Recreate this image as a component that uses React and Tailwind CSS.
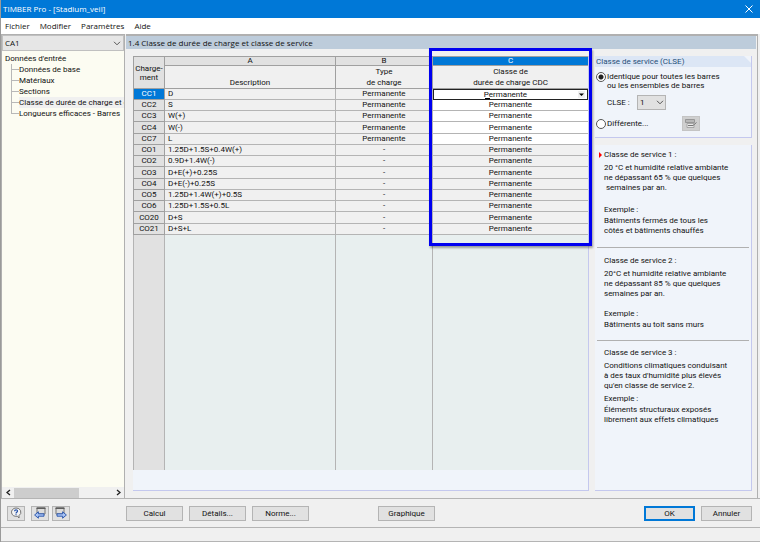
import { useState } from 'react'

const menus = ['Fichier', 'Modifier', 'Paramètres', 'Aide']

const treeItems = [
  'Données de base',
  'Matériaux',
  'Sections',
  'Classe de durée de charge et classe de service',
  'Longueurs efficaces - Barres',
]

const loads = [
  { id: 'CC1', description: 'D', type: 'Permanente', editable: true },
  { id: 'CC2', description: 'S', type: 'Permanente', editable: true },
  { id: 'CC3', description: 'W(+)', type: 'Permanente', editable: true },
  { id: 'CC4', description: 'W(-)', type: 'Permanente', editable: true },
  { id: 'CC7', description: 'L', type: 'Permanente', editable: true },
  { id: 'CO1', description: '1.25D+1.5S+0.4W(+)', type: '-' },
  { id: 'CO2', description: '0.9D+1.4W(-)', type: '-' },
  { id: 'CO3', description: 'D+E(+)+0.25S', type: '-' },
  { id: 'CO4', description: 'D+E(-)+0.25S', type: '-' },
  { id: 'CO5', description: '1.25D+1.4W(+)+0.5S', type: '-' },
  { id: 'CO6', description: '1.25D+1.5S+0.5L', type: '-' },
  { id: 'CO20', description: 'D+S', type: '-' },
  { id: 'CO21', description: 'D+S+L', type: '-' },
]

function Chevron({ className }) {
  return (
    <svg viewBox="0 0 8 5" className={className} fill="none" stroke="#555" aria-hidden="true">
      <path d="M1 0.8 4 3.8 7 0.8" />
    </svg>
  )
}

function PushButton({ children, primary, className = '' }) {
  return (
    <button
      type="button"
      className={`h-[15px] bg-[#e1e1e1] text-center leading-[11px] ${
        primary ? 'border-2 border-[#0078d7]' : 'border border-[#b4b4b4]'
      } ${className}`}
    >
      {children}
    </button>
  )
}

function WindowIcon({ back }) {
  return (
    <svg viewBox="0 0 14 12" className="h-3 w-[14px]" aria-hidden="true">
      <path d={back ? 'M4 1h8v6H4z' : 'M2 1h8v6H2z'} fill="#dcdcdc" stroke="#777" />
      <path d={back ? 'M3.5 1.2h9' : 'M1.5 1.2h9'} stroke="#555" strokeWidth="1.4" />
      <path
        d={back ? 'M1.6 8 5.4 4.8V6.8H11V9.2H5.4V11.2Z' : 'M12.4 8 8.6 4.8V6.8H3V9.2H8.6V11.2Z'}
        fill="#a9c4f5"
        stroke="#2450a8"
        strokeWidth="0.9"
      />
    </svg>
  )
}

function Sidebar() {
  return (
    <aside className="flex w-[124px] shrink-0 flex-col border-x border-t border-[#b0b0b0] bg-[#fcfcf2]">
      <div className="relative">
        <select aria-label="Cas" className="block h-4 w-full appearance-none border border-[#c0c0c0] bg-[#e6e6e6] px-[2px] font-['Open_Sans',sans-serif] leading-[14px]">
          <option>CA1</option>
        </select>
        <Chevron className="pointer-events-none absolute top-[6px] right-[3px] h-[5px] w-2" />
      </div>
      <div className="flex-1 overflow-hidden pt-[2px] pl-[3px] leading-[11px] whitespace-nowrap">
        <div>Données d'entrée</div>
        <ul className="ml-[6px]">
          {treeItems.map((item, i) => (
            <li key={item} className="flex">
              <span className="flex w-2 shrink-0 flex-col">
                <span className="h-[6px] border-b border-l border-[#b8b8b8]" />
                <span className={i < treeItems.length - 1 ? 'h-[5px] border-l border-[#b8b8b8]' : 'h-[5px]'} />
              </span>
              <span className={i === 3 ? 'bg-[#f0f0f0]' : ''}>{item}</span>
            </li>
          ))}
        </ul>
      </div>
      <div className="flex h-[11px] items-center bg-[#f0f0f0]">
        <button type="button" aria-label="Défiler à gauche" className="flex w-3 justify-center">
          <svg viewBox="0 0 5 7" className="h-[7px] w-[5px]" fill="none" stroke="#222" strokeWidth="1.3"><path d="M4 1 1 3.5 4 6" /></svg>
        </button>
        <div className="flex-1"><div className="h-[10px] w-2/3 bg-[#cdcdcd]" /></div>
        <button type="button" aria-label="Défiler à droite" className="flex w-3 justify-center">
          <svg viewBox="0 0 5 7" className="h-[7px] w-[5px]" fill="none" stroke="#222" strokeWidth="1.3"><path d="M1 1 4 3.5 1 6" /></svg>
        </button>
      </div>
    </aside>
  )
}

function LoadTable() {
  return (
    <table className="h-full w-full table-fixed border-separate border-spacing-0 text-center leading-[10px]">
      <colgroup>
        <col className="w-[32px]" />
        <col className="w-[171px]" />
        <col className="w-[97px]" />
        <col />
      </colgroup>
      <thead>
        <tr className="h-[10px] bg-[#e1e1e1]">
          <th rowSpan={2} className="border border-[#a0a0a0] p-0 leading-[9px] font-normal">
            Charge-<br />ment
          </th>
          <th className="border-t border-r border-b border-[#a0a0a0] p-0 leading-[8px] font-normal">A</th>
          <th className="border-t border-r border-b border-[#a0a0a0] p-0 leading-[8px] font-normal">B</th>
          <th className="border-t border-b border-[#a0a0a0] bg-[#0078d7] p-0 leading-[8px] font-normal text-white">C</th>
        </tr>
        <tr className="h-[23px] bg-[#f0f0f0]">
          <th className="border-r border-b border-[#a0a0a0] p-0 align-bottom leading-[11px] font-normal">Description</th>
          <th className="border-r border-b border-[#a0a0a0] p-0 leading-[11px] font-normal">Type<br />de charge</th>
          <th className="border-b border-[#a0a0a0] p-0 leading-[11px] font-normal">Classe de<br />durée de charge CDC</th>
        </tr>
      </thead>
      <tbody>
        {loads.map((load, i) => (
          <tr key={load.id} className="h-[11px] nth-[4n]:h-3">
            <th
              scope="row"
              className={`border-x border-b border-[#a0a0a0] p-0 font-normal ${i === 0 ? 'bg-[#0078d7] text-white' : 'bg-[#e1e1e1]'}`}
            >
              {load.id}
            </th>
            <td className="border-r border-b border-[#b4b4b4] bg-[#f0f0f0] p-0 pl-[3px] text-left">{load.description}</td>
            <td className="border-r border-b border-[#b4b4b4] bg-[#f0f0f0] p-0">{load.type}</td>
            <td className={`p-0 ${i === 0 ? '' : 'border-b border-[#b4b4b4]'} ${load.editable ? 'bg-white' : 'bg-[#f0f0f0]'}`}>
              {i === 0 ? (
                <div className="relative">
                  <select
                    aria-label="Classe de durée de charge CDC"
                    className="block h-[11px] w-full appearance-none border border-[#222] bg-white pr-[10px] leading-[9px] [text-align-last:center]"
                  >
                    <option>Permanente</option>
                  </select>
                  {/* overwrite caret under the first letter */}
                  <span className="pointer-events-none absolute bottom-px left-1/2 -ml-[26px] h-px w-[5px] bg-black" />
                  <svg viewBox="0 0 7 7" className="pointer-events-none absolute top-[2px] right-[3px] h-[7px] w-[7px] bg-[#f0f0f0]" aria-hidden="true">
                    <path d="M1 2.5h5L3.5 5z" fill="#000" />
                  </svg>
                </div>
              ) : (
                'Permanente'
              )}
            </td>
          </tr>
        ))}
        {/* empty part of the grid */}
        <tr className="bg-[#e8efef]">
          <td className="border-x border-[#b4b4b4] bg-[#e1e1e1] p-0" />
          <td className="border-r border-[#b4b4b4] p-0" />
          <td className="border-r border-[#b4b4b4] p-0" />
          <td className="p-0" />
        </tr>
      </tbody>
    </table>
  )
}

function ServiceClass() {
  const [mode, setMode] = useState('same')
  const radio =
    'h-[10px] w-[10px] shrink-0 appearance-none rounded-full border border-[#555] bg-white checked:bg-[radial-gradient(circle,#222_0_2px,#fff_3px)]'

  return (
    <fieldset className="flex h-[82px] shrink-0 flex-col border-r border-b border-[#c4c8ee] bg-[#f0f4fa]">
      <div className="h-[11px] bg-[#dce6f5] pl-px leading-[11px] text-[#1f4e79] [clip-path:polygon(0_0,calc(100%-7px)_0,100%_7px,100%_100%,0_100%)]">
        Classe de service (CLSE)
      </div>
      <label className="mt-[5px] flex gap-px pl-px leading-[9px]">
        <input type="radio" name="clse" className={radio} checked={mode === 'same'} onChange={() => setMode('same')} />
        <span>Identique pour toutes les barres<br />ou les ensembles de barres</span>
      </label>
      <div className="mt-[5px] flex items-center pl-3">
        <label htmlFor="clse" className="w-[30px]">CLSE :</label>
        <div className="relative">
          <select id="clse" className="block h-[15px] w-[29px] appearance-none border border-[#b4b4b4] bg-[#e1e1e1] px-[2px] leading-[13px]">
            <option>1</option>
            <option>2</option>
            <option>3</option>
          </select>
          <Chevron className="pointer-events-none absolute top-[5px] right-[2px] h-[5px] w-2" />
        </div>
      </div>
      <div className="mt-[6px] flex items-center pl-px">
        <label className="flex w-[86px] items-center gap-px">
          <input type="radio" name="clse" className={radio} checked={mode === 'different'} onChange={() => setMode('different')} />
          Différente...
        </label>
        <button type="button" aria-label="Modifier" className="flex h-[15px] w-[18px] items-center justify-center border border-[#c4c4c4] bg-[#cfcfcf]">
          <svg viewBox="0 0 14 11" className="h-[11px] w-[14px]" aria-hidden="true">
            <path d="M1.5 1.5h9v3h-9z" fill="#b8b8b8" stroke="#8c8c8c" strokeWidth="0.8" />
            <path d="M3 5.5h7v4H3z" fill="#e8e8e8" stroke="#9a9a9a" strokeWidth="0.8" />
            <path d="M4 7.5h3M12.5 4.5 9 7.5H7" stroke="#777" fill="none" />
          </svg>
        </button>
      </div>
    </fieldset>
  )
}

function ClassInfo() {
  return (
    <div className="flex-1 border-r border-b border-[#c4c8ee] bg-[#f0f4fa] px-[2px] pt-[5px] leading-[10px]">
      <section className="relative h-[98px] border-b border-[#b0b0b0] pl-[7px]">
        <svg viewBox="0 0 3 6" className="absolute top-[2px] left-[2px] h-[6px] w-[3px]" aria-hidden="true">
          <path d="M0 0 3 3 0 6z" fill="#f00" />
        </svg>
        <h3>Classe de service 1 :</h3>
        <p className="mt-[3px]">20 °C et humidité relative ambiante<br />ne dépassant 65 % que quelques<br />&nbsp;semaines par an.</p>
        <p className="mt-3">Exemple :</p>
        <p className="mt-px">Bâtiments fermés de tous les<br />côtés et bâtiments chauffés</p>
      </section>
      <section className="mt-2 h-[85px] border-b border-[#b0b0b0] pl-[7px]">
        <h3>Classe de service 2 :</h3>
        <p className="mt-[3px]">20°C et humidité relative ambiante<br />ne dépassant 85 % que quelques<br />semaines par an.</p>
        <p className="mt-[10px]">Exemple :</p>
        <p className="mt-px">Bâtiments au toit sans murs</p>
      </section>
      <section className="mt-[7px] pl-[7px]">
        <h3>Classe de service 3 :</h3>
        <p className="mt-[3px]">Conditions climatiques conduisant<br />à des taux d'humidité plus élevés<br />qu'en classe de service 2.</p>
        <p className="mt-[3px]">Exemple :</p>
        <p className="mt-px">Éléments structuraux exposés<br />librement aux effets climatiques</p>
      </section>
    </div>
  )
}

export default function App() {
  return (
    <div className="flex h-screen flex-col overflow-hidden border-l border-[#9a9a9a] bg-[#f0f0f0] font-[Roboto,Arial,sans-serif] text-[8px] text-[#111]">
      <header className="flex h-[18px] shrink-0 items-center justify-between bg-[#0078d7] pr-[7px] pl-[2px] font-['Open_Sans',sans-serif] text-white">
        <h1>TIMBER Pro - [Stadium_veil]</h1>
        <button type="button" aria-label="Fermer">
          <svg viewBox="0 0 8 8" className="h-2 w-2" stroke="#fff" aria-hidden="true"><path d="M0.5 0.5 7.5 7.5M7.5 0.5 0.5 7.5" /></svg>
        </button>
      </header>
      <nav className="flex h-4 shrink-0 items-center gap-[10px] bg-white pl-1 font-['Open_Sans',sans-serif]">
        {menus.map((menu) => (
          <button key={menu} type="button">{menu}</button>
        ))}
      </nav>

      <div className="flex min-h-0 flex-1 gap-px border-b border-[#b4b4b4] pr-[2px]">
        <Sidebar />
        <main className="flex min-w-0 flex-1 flex-col border-t-2 border-r border-[#b0b0b0]">
          <h2 className="mr-px h-[13px] shrink-0 bg-[#bdccdb] pl-[2px] font-['Open_Sans',sans-serif] leading-[13px]">
            1.4 Classe de durée de charge et classe de service
          </h2>
          <div className="flex min-h-0 flex-1 gap-[6px] pt-[7px] pr-[5px] pb-[7px] pl-[7px]">
            <div className="relative flex min-w-0 flex-1 flex-col border-r border-b border-[#c4c8ee]">
              <div className="min-h-0 flex-1"><LoadTable /></div>
              <div className="h-[20px] shrink-0 bg-[#f0f4fa]" />
              <div className="pointer-events-none absolute -top-[8px] -right-[4px] h-[198px] w-[163px] border-3 border-[#0000f0] shadow-[1px_2px_2px_rgba(0,0,0,0.35)]" />
            </div>
            <div className="flex w-[157px] shrink-0 flex-col gap-[7px]">
              <ServiceClass />
              <ClassInfo />
            </div>
          </div>
        </main>
      </div>

      <footer className="flex h-[28px] shrink-0 items-center gap-[6px] pr-2 pl-[6px]">
        <PushButton className="flex w-[18px] items-center justify-center">
          <svg viewBox="0 0 12 12" className="h-3 w-3" aria-label="Aide">
            <path d="M6 1a4.6 4.2 0 1 0 1.5 8.2L9 11V8.6A4.4 4.2 0 0 0 6 1z" fill="#f4f4f4" stroke="#666" strokeWidth="0.9" />
            <path d="M4.6 4.2C4.6 2.4 7.6 2.4 7.5 4.1 7.4 5.2 6 5.2 6 6.4M6 7.2v1.1" fill="none" stroke="#2450a8" strokeWidth="1.2" />
          </svg>
        </PushButton>
        <div className="flex gap-[3px]">
          <PushButton className="flex w-[18px] items-center justify-center"><WindowIcon back /></PushButton>
          <PushButton className="flex w-[18px] items-center justify-center"><WindowIcon /></PushButton>
        </div>
        <PushButton className="ml-[50px] w-[57px]">Calcul</PushButton>
        <PushButton className="w-[57px]">Détails...</PushButton>
        <PushButton className="w-[57px]">Norme...</PushButton>
        <PushButton className="ml-[63px] w-[57px]">Graphique</PushButton>
        <PushButton primary className="ml-auto w-[51px]">OK</PushButton>
        <PushButton className="w-[51px]">Annuler</PushButton>
      </footer>
      <div className="h-[15px] shrink-0 border-t border-b border-[#b4b4b4]" />
    </div>
  )
}
